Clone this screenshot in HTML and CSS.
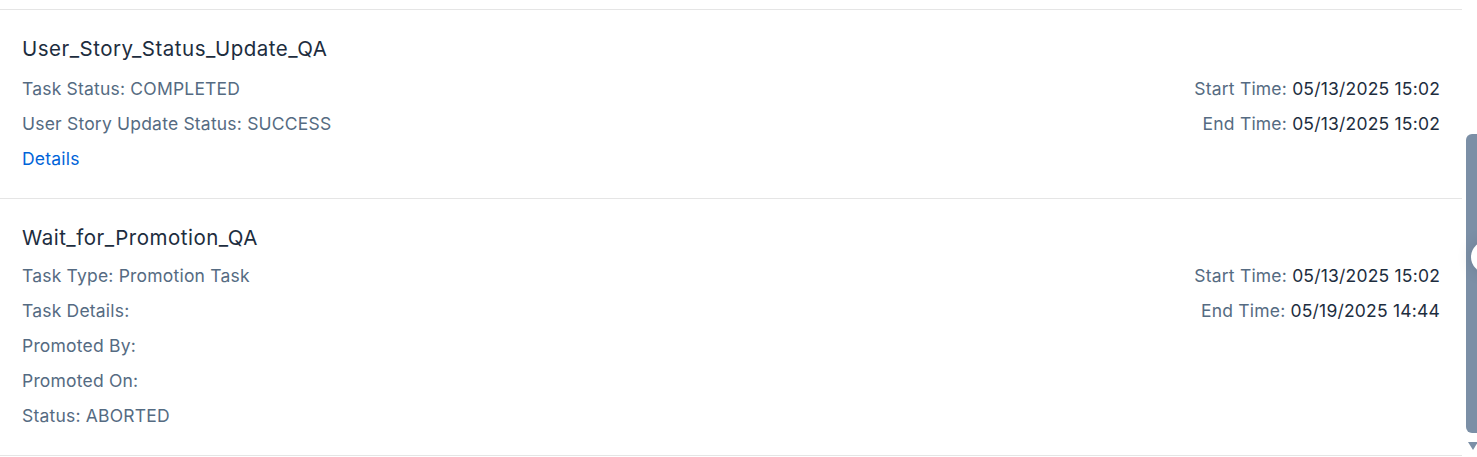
FILE: index.html
```html
<!DOCTYPE html>
<html>
<head>
<meta charset="utf-8">
<link rel="stylesheet" href="styles.css">
</head>
<body>
<div class="page">
  <div class="list">
    <div class="item">
      <div class="title">User_Story_Status_Update_QA</div>
      <div class="rows">
        <div class="row"><span class="label">Task Status: COMPLETED</span><span class="right"><span class="label">Start Time: </span><span class="value">05/13/2025 15:02</span></span></div>
        <div class="row"><span class="label">User Story Update Status: SUCCESS</span><span class="right"><span class="label">End Time: </span><span class="value">05/13/2025 15:02</span></span></div>
        <div class="row"><a class="link">Details</a></div>
      </div>
    </div>
    <div class="item item-last">
      <div class="title">Wait_for_Promotion_QA</div>
      <div class="rows">
        <div class="row"><span class="label">Task Type: Promotion Task</span><span class="right"><span class="label">Start Time: </span><span class="value">05/13/2025 15:02</span></span></div>
        <div class="row"><span class="label">Task Details:</span><span class="right"><span class="label">End Time: </span><span class="value">05/19/2025 14:44</span></span></div>
        <div class="row"><span class="label">Promoted By:</span></div>
        <div class="row"><span class="label">Promoted On:</span></div>
        <div class="row"><span class="label">Status: ABORTED</span></div>
      </div>
    </div>
  </div>
  <div class="scrollbar">
    <div class="thumb"></div>
    <div class="arrow"></div>
  </div>
  <div class="fab"></div>
</div>
</body>
</html>
```
FILE: styles.css
```css
html, body {
  margin: 0;
  padding: 0;
  background: #ffffff;
}
body {
  font-family: Inter, "Liberation Sans", Arial, sans-serif;
  overflow: hidden;
}
.page {
  position: relative;
  display: flex;
  height: 457px;
  overflow: hidden;
}
.list {
  flex: 1;
  padding-top: 9px;
}
.item {
  border-top: 1px solid #e5e5e5;
  padding: 27px 22px 29px 22px;
}
.item-last {
  border-bottom: 1px solid #e5e5e5;
}
.item-last .rows {
  margin-top: 16px;
}
.title {
  font-size: 20.5px;
  letter-spacing: 0.5px;
  line-height: 24px;
  color: #1d2d3e;
}
.rows {
  display: flex;
  flex-direction: column;
  gap: 15px;
  margin-top: 18px;
}
.row {
  display: flex;
  justify-content: space-between;
  font-size: 17.5px;
  letter-spacing: 0.2px;
  line-height: 20px;
}
.label {
  color: #556b82;
}
.value {
  color: #1d2d3e;
}
.link {
  color: #0064d9;
  text-decoration: none;
}
.scrollbar {
  width: 15px;
  display: flex;
  flex-direction: column;
  align-items: flex-end;
  padding-top: 134px;
}
.thumb {
  width: 11px;
  height: 299px;
  background: #7b8fa6;
  border-radius: 6px 0 0 6px;
}
.arrow {
  margin-top: 9px;
  width: 0;
  height: 0;
  border-left: 5px solid transparent;
  border-right: 5px solid transparent;
  border-top: 8px solid #7b8fa6;
  align-self: center;
  transform: translateX(3px);
}
.fab {
  position: absolute;
  left: 1471px;
  top: 241px;
  width: 32px;
  height: 32px;
  border-radius: 50%;
  background: #ffffff;
  box-shadow: 0 0 16px rgba(0, 0, 0, 0.12);
}
```
